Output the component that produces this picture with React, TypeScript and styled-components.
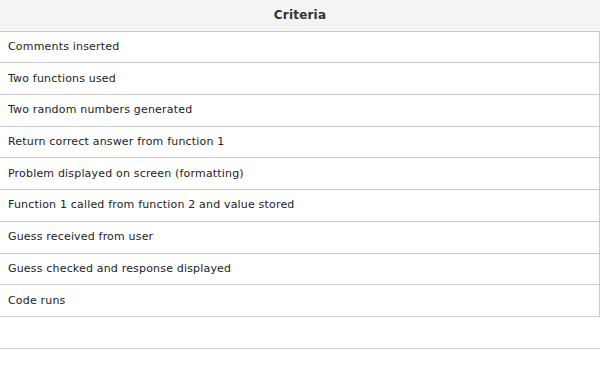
import * as React from 'react';
import styled, {createGlobalStyle} from 'styled-components';

const GlobalStyle = createGlobalStyle`
  html, body {
    margin: 0;
    padding: 0;
    background: #fff;
  }
`;

const Table = styled.div`
  width: 600px;
  font-family: 'DejaVu Sans', Verdana, sans-serif;
  color: #222;
`;

const HeaderCell = styled.div`
  box-sizing: border-box;
  height: 31.7px;
  padding-bottom: 1px;
  background-color: #f4f4f4;
  border-bottom: solid 1px #c8cbcf;
  display: flex;
  align-items: center;
  justify-content: center;
  font-size: 12px;
  font-weight: bold;
  letter-spacing: 0.2px;
  color: #333;
`;

const Row = styled.div<{$open?: boolean}>`
  box-sizing: border-box;
  height: 31.7px;
  padding: 0 8px 1px;
  border-bottom: solid 1px #c8cbcf;
  border-right: ${p => (p.$open ? 'none' : 'solid 1px #c8cbcf')};
  display: flex;
  align-items: center;
  font-size: 11px;
  letter-spacing: 0.18px;
`;

const criteria = [
  'Comments inserted',
  'Two functions used',
  'Two random numbers generated',
  'Return correct answer from function 1',
  'Problem displayed on screen (formatting)',
  'Function 1 called from function 2 and value stored',
  'Guess received from user',
  'Guess checked and response displayed',
  'Code runs',
];

export default function App() {
  return (
    <>
      <GlobalStyle />
      <Table>
        <HeaderCell>Criteria</HeaderCell>
        {criteria.map(c => <Row key={c}>{c}</Row>)}
        <Row $open />
      </Table>
    </>
  );
}
